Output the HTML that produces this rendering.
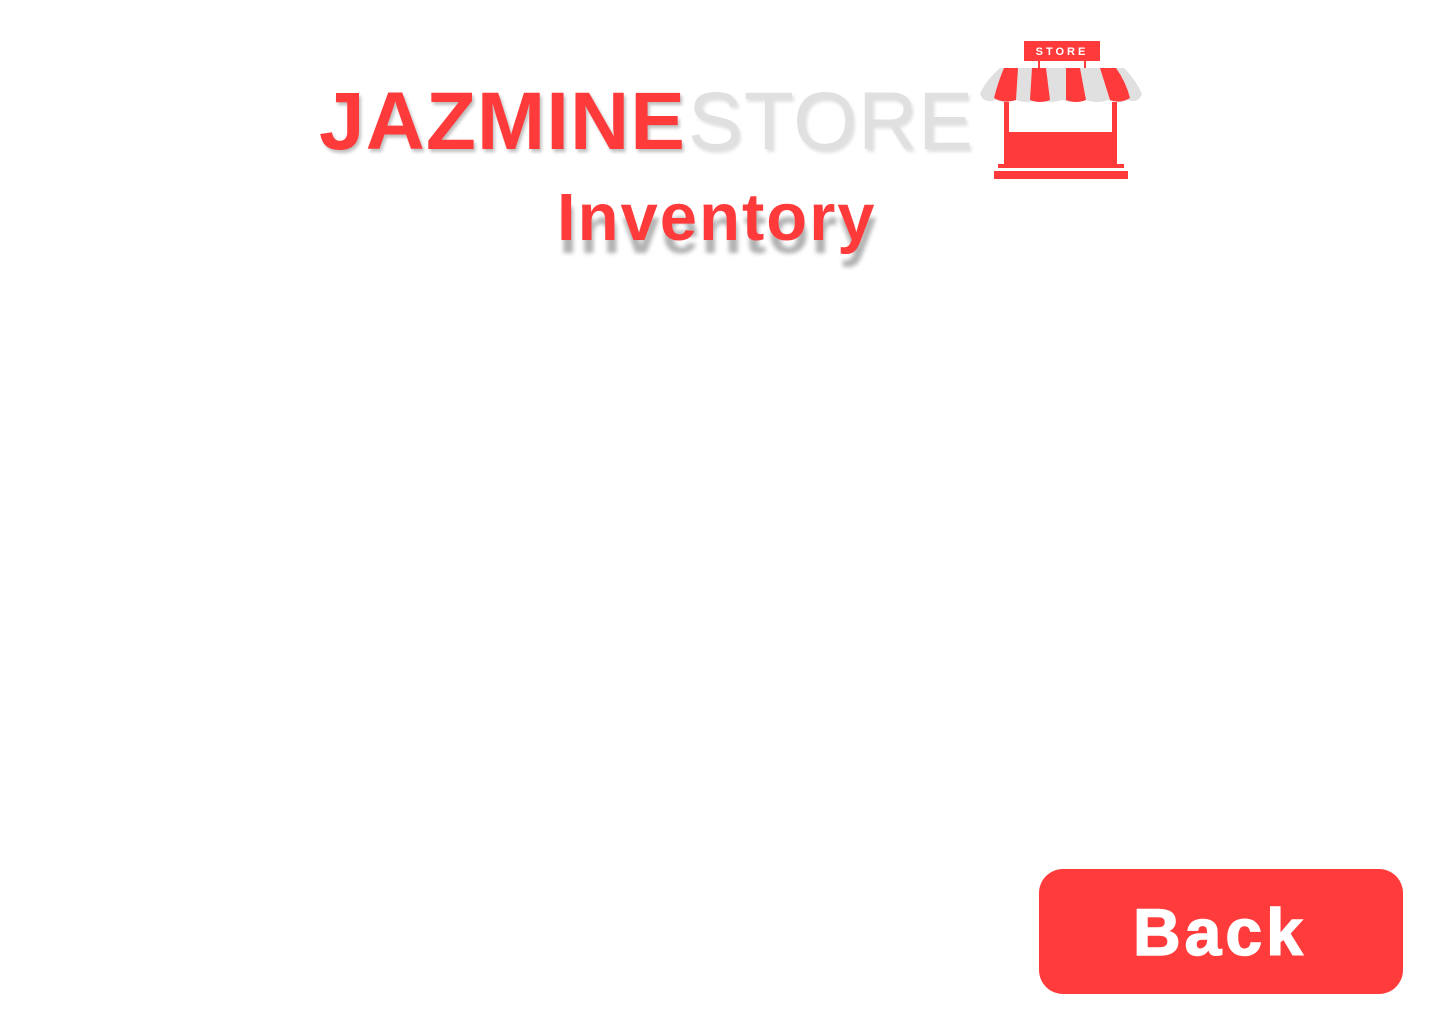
<!DOCTYPE html>
<html><head><style>
body{margin:0;width:1440px;height:1024px;background:#fff;position:relative;overflow:hidden;font-family:"Liberation Sans",sans-serif}
.t{position:absolute;white-space:nowrap;line-height:1}
</style></head><body>
<div class="t" style="left:319px;top:81px;font-size:82px;font-weight:bold;color:#ff3a3a;letter-spacing:1px;text-shadow:2px 3px 3px rgba(0,0,0,.25)">JAZMINE</div>
<div class="t" style="left:688px;top:81px;font-size:82px;color:#e0e0e0;letter-spacing:1px;text-shadow:2px 3px 3px rgba(0,0,0,.12)">STORE</div>
<svg style="position:absolute;left:978px;top:38px" width="168" height="148" viewBox="0 0 168 148">
<rect x="46" y="3" width="76" height="20" fill="#ff3a3a"/>
<text x="84" y="17" font-family="Liberation Sans" font-weight="bold" font-size="11" fill="#fff" text-anchor="middle" letter-spacing="3">STORE</text>
<rect x="60" y="23" width="2" height="10" fill="#ff3a3a"/><rect x="106" y="23" width="2" height="10" fill="#ff3a3a"/>
<path d="M22 30 H146 Q158 42 164 56 Q160 66 150 62 Q140 66 130 62 Q120 66 108 62 Q96 66 84 62 Q72 66 60 62 Q48 66 38 62 Q26 66 18 62 Q6 66 2 56 Q8 42 22 30 Z" fill="#e0e0e0"/>
<path d="M26 30 H40 L38 62 Q26 66 16 60 Q20 44 26 30Z M54 30 H68 L72 62 Q62 66 52 62Z M88 30 H102 L108 62 Q98 66 88 62Z M122 30 H138 Q148 44 152 60 Q142 66 132 62Z" fill="#ff3a3a"/>
<rect x="26" y="64" width="5" height="62" fill="#ff3a3a"/><rect x="134" y="64" width="5" height="62" fill="#ff3a3a"/>
<rect x="26" y="94" width="113" height="32" fill="#ff3a3a"/>
<rect x="20" y="126" width="126" height="4" fill="#ff3a3a"/>
<rect x="16" y="133" width="134" height="8" fill="#ff3a3a"/>
</svg>
<div class="t" style="left:557px;top:184px;font-size:67px;font-weight:bold;color:#ff3a3a;letter-spacing:2px;text-shadow:2px 13px 4px rgba(0,0,0,.3)">Inventory</div>
<div style="position:absolute;left:1039px;top:869px;width:364px;height:125px;border-radius:24px;background:#ff3b3b"></div>
<div class="t" style="left:1133px;top:899px;font-size:66px;font-weight:bold;color:#fff;letter-spacing:4px;-webkit-text-stroke:1.5px #fff">Back</div>
</body></html>
